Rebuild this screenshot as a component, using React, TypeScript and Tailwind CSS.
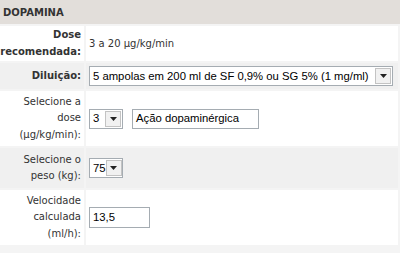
const label = "text-right text-[10px] leading-[16.5px] text-[#333] pr-[3px]";

function Arrow() {
  return (
    <span className="flex h-[16px] w-[16px] shrink-0 items-center justify-center border border-[#c3c3c3] bg-[#f1f1f1]">
      <svg width="7" height="4" viewBox="0 0 7 4">
        <path d="M0 0h7L3.5 4z" fill="#222" />
      </svg>
    </span>
  );
}

function Select({ value, className }: { value: string; className: string }) {
  return (
    <div
      className={`flex shrink-0 items-center justify-between whitespace-nowrap border border-[#a5acb2] bg-white pl-[3px] pr-[1px] font-['Liberation_Sans',Arial,sans-serif] text-[11.3px] text-black ${className}`}
    >
      <span>{value}</span>
      <Arrow />
    </div>
  );
}

function Input({ value, className }: { value: string; className: string }) {
  return (
    <div
      className={`flex shrink-0 items-center whitespace-nowrap border border-[#a5acb2] bg-white pl-[3px] font-['Liberation_Sans',Arial,sans-serif] text-[11.3px] text-black ${className}`}
    >
      {value}
    </div>
  );
}

export default function App() {
  return (
    <div className="h-[253px] w-[400px] overflow-hidden bg-[#f4f4f4] font-['DejaVu_Sans',Verdana,sans-serif] text-[#333]">
      <div className="flex h-[24px] items-center bg-[#e2deda] pl-[3px] text-[10px] font-bold">
        DOPAMINA
      </div>
      <div className="mt-[2px] grid grid-cols-[84px_1fr] gap-[2px] pr-[2px]">
        <div className={`${label} flex h-[35px] flex-col justify-center bg-white font-bold leading-[15px]`}>
          <span>Dose</span>
          <span>recomendada:</span>
        </div>
        <div className="flex items-center bg-white pl-[3px] text-[10px]">3 a 20 µg/kg/min</div>

        <div className={`${label} flex h-[26px] items-center justify-end bg-[#f0f0f0] font-bold`}>
          Diluição:
        </div>
        <div className="flex items-center bg-[#f0f0f0] pl-[3px]">
          <Select value="5 ampolas em 200 ml de SF 0,9% ou SG 5% (1 mg/ml)" className="h-[20px] w-[304px]" />
        </div>

        <div className={`${label} flex h-[55px] flex-col justify-center bg-white`}>
          <span>Selecione a</span>
          <span>dose</span>
          <span>(µg/kg/min):</span>
        </div>
        <div className="flex items-center gap-[9px] bg-white pl-[3px]">
          <Select value="3" className="h-[20px] w-[34px]" />
          <Input value="Ação dopaminérgica" className="h-[20px] w-[127px]" />
        </div>

        <div className={`${label} flex h-[40px] flex-col justify-center bg-[#f0f0f0]`}>
          <span>Selecione o</span>
          <span>peso (kg):</span>
        </div>
        <div className="flex items-center bg-[#f0f0f0] pl-[3px]">
          <Select value="75" className="h-[20px] w-[34px]" />
        </div>

        <div className={`${label} flex h-[55px] flex-col justify-center bg-white`}>
          <span>Velocidade</span>
          <span>calculada</span>
          <span>(ml/h):</span>
        </div>
        <div className="flex items-center bg-white pl-[3px]">
          <Input value="13,5" className="h-[21px] w-[61px]" />
        </div>
      </div>
    </div>
  );
}
